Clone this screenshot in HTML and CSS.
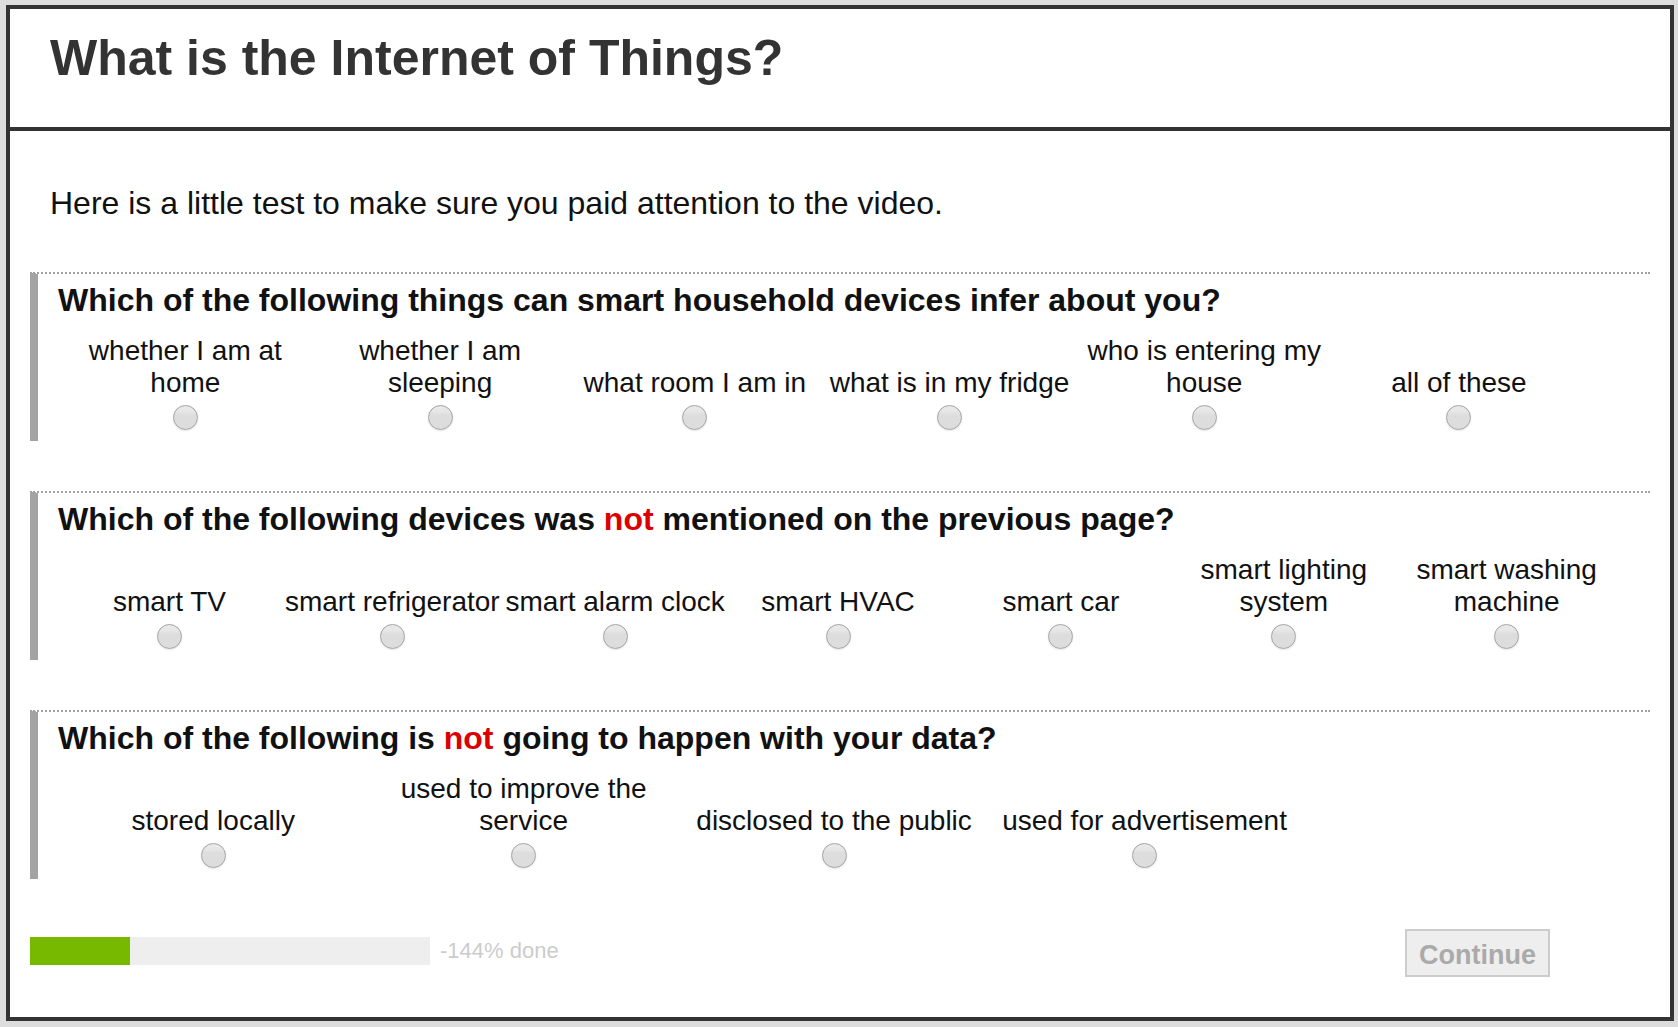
FILE: index.html
```html
<!DOCTYPE html>
<html lang="en">
<head>
<meta charset="utf-8">
<title>What is the Internet of Things?</title>
<meta name="viewport" content="width=device-width, initial-scale=1">
<link rel="stylesheet" href="styles.css">
</head>
<body>
<form class="survey">
  <header class="header">
    <h1 class="title">What is the Internet of Things?</h1>
  </header>
  <main class="content">
    <p class="intro">Here is a little test to make sure you paid attention to the video.</p>
    <fieldset class="question six" aria-labelledby="q1">
      <h2 class="prompt" id="q1">Which of the following things can smart household devices infer about you?</h2>
      <div class="options">
        <label class="option">whether I am at home<input type="radio" name="infer"></label>
        <label class="option">whether I am sleeping<input type="radio" name="infer"></label>
        <label class="option">what room I am in<input type="radio" name="infer"></label>
        <label class="option">what is in my fridge<input type="radio" name="infer"></label>
        <label class="option">who is entering my house<input type="radio" name="infer"></label>
        <label class="option">all of these<input type="radio" name="infer"></label>
      </div>
    </fieldset>
    <fieldset class="question seven" aria-labelledby="q2">
      <h2 class="prompt" id="q2">Which of the following devices was <em>not</em> mentioned on the previous page?</h2>
      <div class="options">
        <label class="option">smart TV<input type="radio" name="device"></label>
        <label class="option">smart refrigerator<input type="radio" name="device"></label>
        <label class="option">smart alarm clock<input type="radio" name="device"></label>
        <label class="option">smart HVAC<input type="radio" name="device"></label>
        <label class="option">smart car<input type="radio" name="device"></label>
        <label class="option">smart lighting system<input type="radio" name="device"></label>
        <label class="option">smart washing machine<input type="radio" name="device"></label>
      </div>
    </fieldset>
    <fieldset class="question four" aria-labelledby="q3">
      <h2 class="prompt" id="q3">Which of the following is <em>not</em> going to happen with your data?</h2>
      <div class="options">
        <label class="option">stored locally<input type="radio" name="data"></label>
        <label class="option">used to improve the service<input type="radio" name="data"></label>
        <label class="option">disclosed to the public<input type="radio" name="data"></label>
        <label class="option">used for advertisement<input type="radio" name="data"></label>
      </div>
    </fieldset>
    <footer class="footer">
      <div class="completion">
        <div class="progress"><div class="bar" style="width: 25%"></div></div>
        <span class="status">-144% done</span>
      </div>
      <button class="continue" type="submit" disabled>Continue</button>
    </footer>
  </main>
</form>
</body>
</html>
```
FILE: styles.css
```css
* {
  box-sizing: border-box;
}

body {
  margin: 0;
  padding: 5px 4px 6px 6px;
  background: #ddd;
  color: #111;
  font-family: Arial, "Liberation Sans", sans-serif;
}

.survey {
  border: 4px solid #333;
  background: #fff;
}

.header {
  padding: 21px 40px 41px;
  border-bottom: 4px solid #333;
}

.title {
  margin: 0;
  color: #333;
  font-size: 50px;
  line-height: 56px;
}

.content {
  padding: 52px 20px 40px;
}

.intro {
  margin: 0 0 49px;
  padding: 0 20px;
  font-size: 32px;
  line-height: 40px;
}

.question {
  min-width: 0;
  margin: 0 0 50px;
  padding: 6px 0 11px 20px;
  border: 0;
  border-top: 2px dotted #a3a3a3;
  border-left: 8px solid #a3a3a3;
}

.prompt {
  margin: 0 0 15px;
  font-size: 32px;
  line-height: 40px;
}

.prompt em {
  color: #d00;
  font-style: normal;
}

.options {
  display: flex;
  align-items: flex-end;
}

.option {
  display: flex;
  flex-direction: column;
  align-items: center;
  gap: 6px;
  font-size: 28px;
  line-height: 32px;
  text-align: center;
}

.six .option {
  width: 16%;
  padding: 0 4px;
}

.seven .option {
  width: 14%;
}

.four .option {
  width: 19.5%;
  padding: 0 4px;
}

.option input {
  appearance: none;
  width: 25px;
  height: 25px;
  margin: 0;
  border: 1px solid #a3a3a3;
  border-radius: 50%;
  background: linear-gradient(#eaeaea, #e6e6e6 25%, #ddd 40%, #ddd);
  box-shadow: 0 1px 2px rgba(0, 0, 0, 0.1);
}

.footer {
  display: flex;
  align-items: flex-start;
  justify-content: space-between;
  padding-right: 100px;
}

.completion {
  display: flex;
  align-items: center;
  gap: 10px;
  padding-top: 8px;
}

.progress {
  width: 400px;
  height: 28px;
  background: #eee;
}

.bar {
  height: 100%;
  background: #76b900;
}

.status {
  color: #ccc;
  font-size: 22px;
}

.continue {
  height: 48px;
  margin: 0;
  padding: 4px 12px 0;
  border: 2px solid #ccc;
  background: #eee;
  color: #aaa;
  font: bold 27px/32px Arial, "Liberation Sans", sans-serif;
}
```
